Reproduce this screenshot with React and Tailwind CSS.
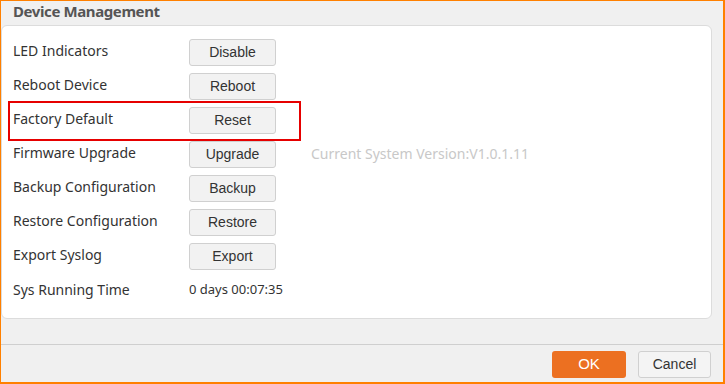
const rows = [
  { label: 'LED Indicators', action: 'Disable' },
  { label: 'Reboot Device', action: 'Reboot' },
  { label: 'Factory Default', action: 'Reset', highlight: true },
  { label: 'Firmware Upgrade', action: 'Upgrade', note: 'Current System Version:V1.0.1.11' },
  { label: 'Backup Configuration', action: 'Backup' },
  { label: 'Restore Configuration', action: 'Restore' },
  { label: 'Export Syslog', action: 'Export' },
];

const labelFont = { fontFamily: '"Noto Sans", "Open Sans", sans-serif' };

function Row({ label, action, note, highlight }) {
  return (
    <div className="relative flex items-start h-[34px]">
      {highlight && (
        <div className="absolute left-[-5px] top-[-6px] w-[293px] h-[40px] border-2 border-[#e60000] pointer-events-none" />
      )}
      <div className="w-[176px] pt-[2px] text-[14px] leading-[20px] text-[#333]" style={labelFont}>
        {label}
      </div>
      <button className="w-[87px] h-[27px] rounded-[3px] border border-[#d0d0d0] bg-[#f2f2f2] text-[14px] text-[#333] font-['Liberation_Sans',Arial,sans-serif]">
        {action}
      </button>
      {note && (
        <div className="ml-[35px] pt-[3px] text-[14px] leading-[20px] text-[#c8c8c8]" style={labelFont}>
          {note}
        </div>
      )}
    </div>
  );
}

export default function App() {
  return (
    <div className="w-[725px] h-[384px] bg-[#f0f0f0] border-t border-l border-r-2 border-b-2 border-[#ff8000] flex flex-col">
      <div className="h-[24px] pl-[12px] text-[15px] font-bold leading-[20px] tracking-[-0.4px] text-[#555]" style={labelFont}>
        Device Management
      </div>
      <div className="mr-[11px] h-[294px] rounded-[6px] border border-[#dcdcdc] bg-white pl-[11px] pt-[13px]">
        {rows.map((r) => (
          <Row key={r.label} {...r} />
        ))}
        <div className="flex items-start h-[34px]">
          <div className="w-[176px] pt-[3px] text-[14px] leading-[20px] text-[#333]" style={labelFont}>
            Sys Running Time
          </div>
          <div className="pt-[2px] text-[13px] leading-[20px] text-[#333]" style={labelFont}>
            0 days 00:07:35
          </div>
        </div>
      </div>
      <div className="mt-[25px] border-t border-[#cfcfcf] flex justify-end gap-[12px] pr-[12px] pt-[6px]">
        <button className="w-[74px] h-[27px] rounded-[3px] bg-[#ec7021] text-white text-[15px] font-['Liberation_Sans',Arial,sans-serif]">
          OK
        </button>
        <button className="w-[73px] h-[27px] rounded-[3px] border border-[#d0d0d0] bg-[#f4f4f4] text-[#333] text-[14px] font-['Liberation_Sans',Arial,sans-serif]">
          Cancel
        </button>
      </div>
    </div>
  );
}
